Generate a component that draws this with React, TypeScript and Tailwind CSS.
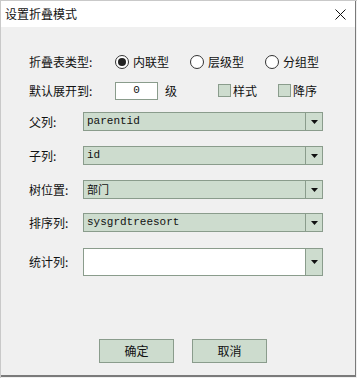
import React from "react"

const cjk = { fontFamily: '"Microsoft YaHei", "Noto Sans CJK SC", sans-serif' }
const mono = { fontFamily: '"Liberation Mono", "Noto Sans CJK SC", monospace' }

function Radio({ checked, label }: { checked?: boolean; label: string }) {
  return (
    <div className="flex items-center">
      <div className="w-[14px] h-[14px] rounded-full border border-[#333] bg-white flex items-center justify-center">
        {checked && <div className="w-[8px] h-[8px] rounded-full bg-[#222]" />}
      </div>
      <span className="ml-[4px] text-[12px] text-[#111] leading-none">{label}</span>
    </div>
  )
}

function Check({ label }: { label: string }) {
  return (
    <div className="flex items-center">
      <div className="w-[13px] h-[13px] border border-[#8a9c8c] bg-[#cddcce]" />
      <span className="ml-[2px] text-[12px] text-[#111] leading-none">{label}</span>
    </div>
  )
}

function Combo({ value, cjkText, white, tall }: { value: string; cjkText?: boolean; white?: boolean; tall?: boolean }) {
  return (
    <div
      className={`w-[240px] ${tall ? "h-[28px]" : "h-[19px]"} flex border border-[#8a9c8c] ${white ? "bg-white" : "bg-[#cddcce]"}`}
    >
      <div className="flex-1 flex items-center pl-[3px] text-[11px] text-[#111]" style={cjkText ? cjk : mono}>
        {value}
      </div>
      <div className="w-[17px] border-l border-[#8a9c8c] bg-[#cddcce] flex items-center justify-center">
        <svg width="7" height="4" viewBox="0 0 7 4">
          <path d="M0 0 H7 L3.5 4 Z" fill="#111" />
        </svg>
      </div>
    </div>
  )
}

function Row({ label, children, className }: { label: string; children: React.ReactNode; className?: string }) {
  return (
    <div className={`flex items-center ${className ?? ""}`}>
      <div className="w-[54px] text-[12px] text-[#111]">{label}</div>
      {children}
    </div>
  )
}

export default function App() {
  return (
    <div className="w-[357px] h-[378px] flex flex-col bg-[#f0f0f0] border-l border-t border-[#c9c9c9]" style={cjk}>
      <div className="w-[355px] h-[376px] flex flex-col border-r border-b-2 border-[#7a7a7a]">
        <div className="h-[26px] bg-white flex items-center justify-between pl-[4px] pr-[9px]">
          <span className="text-[12px] text-[#111]">设置折叠模式</span>
          <svg width="11" height="11" viewBox="0 0 11 11">
            <path d="M0.5 0.5 L10.5 10.5 M10.5 0.5 L0.5 10.5" stroke="#111" strokeWidth="1" />
          </svg>
        </div>
        <div className="flex-1 flex flex-col pl-[28px] pt-[25px]">
          <div className="flex items-center h-[20px]">
            <div className="w-[86px] text-[12px] text-[#111]">折叠表类型:</div>
            <div className="flex items-center gap-[21px]">
              <Radio checked label="内联型" />
              <Radio label="层级型" />
              <Radio label="分组型" />
            </div>
          </div>
          <div className="flex items-center h-[19px] mt-[9px]">
            <div className="w-[86px] text-[12px] text-[#111]">默认展开到:</div>
            <div className="w-[43px] h-[18px] border border-[#8a9c8c] bg-white flex items-center justify-center text-[11px] text-[#111]" style={mono}>
              0
            </div>
            <span className="ml-[7px] text-[12px] text-[#111]">级</span>
            <div className="ml-[41px] flex items-center gap-[21px]">
              <Check label="样式" />
              <Check label="降序" />
            </div>
          </div>
          <Row label="父列:" className="mt-[12px]">
            <Combo value="parentid" />
          </Row>
          <Row label="子列:" className="mt-[15px]">
            <Combo value="id" />
          </Row>
          <Row label="树位置:" className="mt-[15px]">
            <Combo value="部门" cjkText />
          </Row>
          <Row label="排序列:" className="mt-[14px]">
            <Combo value="sysgrdtreesort" />
          </Row>
          <Row label="统计列:" className="mt-[16px]">
            <Combo value="" white tall />
          </Row>
          <div className="flex mt-[63px] ml-[70px] gap-[18px]">
            <button className="w-[75px] h-[24px] border border-[#8a9c8c] bg-[#cddcce] text-[12px] text-[#111]">确定</button>
            <button className="w-[75px] h-[24px] border border-[#8a9c8c] bg-[#cddcce] text-[12px] text-[#111]">取消</button>
          </div>
        </div>
      </div>
    </div>
  )
}
